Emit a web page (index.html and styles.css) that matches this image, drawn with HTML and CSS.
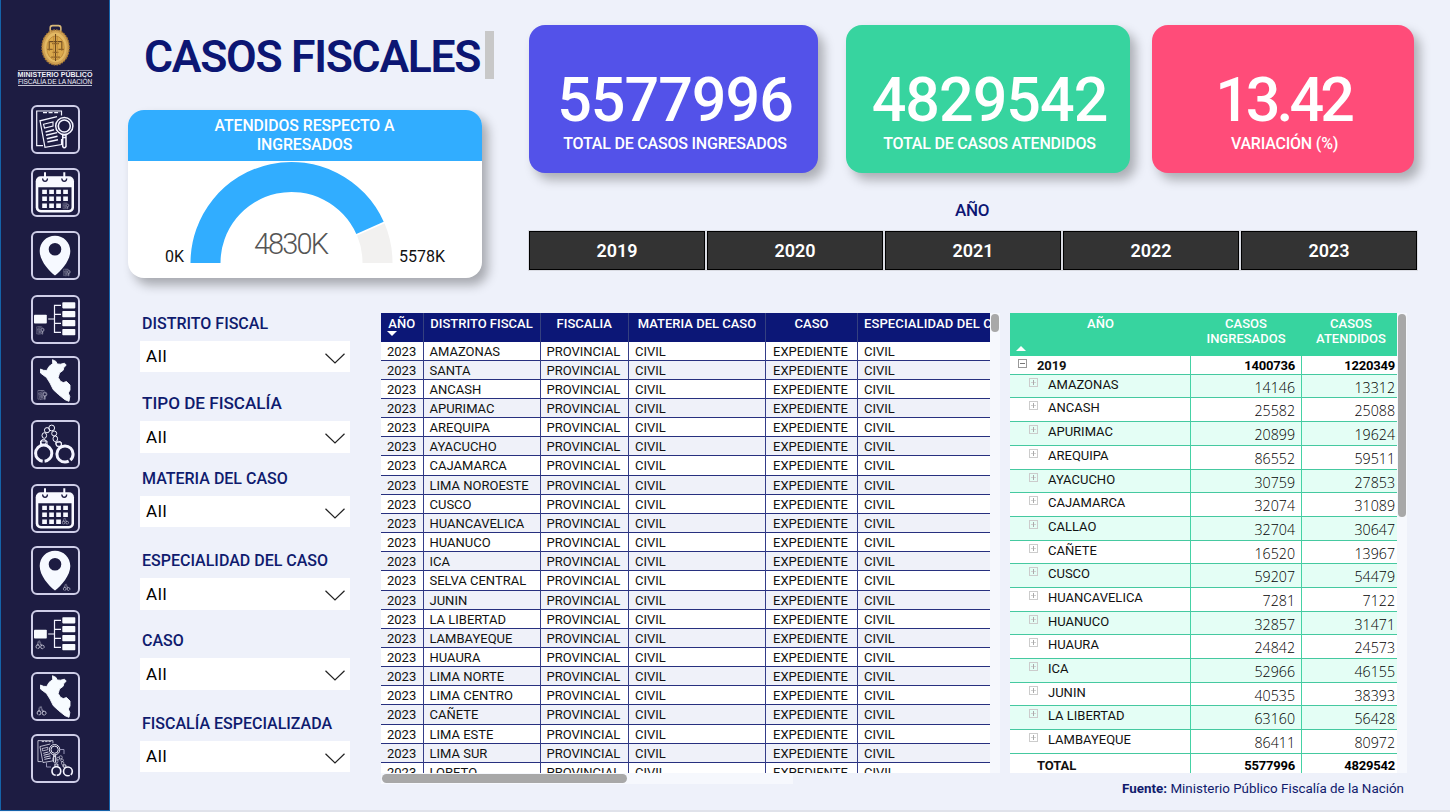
FILE: index.html
```html
<!DOCTYPE html>
<html lang="es">
<head>
<meta charset="utf-8">
<title>Casos Fiscales</title>
<link rel="stylesheet" href="styles.css">
</head>
<body>
<svg class="defs" width="0" height="0">
  <defs>
    <symbol id="doc" viewBox="0 0 48 48">
      <g fill="none" stroke="#f4f4ff" stroke-width="1.2">
        <path d="M12 40.7H5.7V6H30.5V10.5"/>
        <path d="M12 7.6H29" stroke-dasharray="4 1.6" stroke-width="1.3"/>
        <path d="M26 11.6L9 15.8L14 42.3L30.5 39.5V34"/>
        <path d="M12.5 19.2L22 17V21L13.5 23Z" stroke-width="1.1"/>
        <path d="M14.5 27L23 24.8M15 30.3L26 27.6M15.8 33.7L26.5 31.2M16.4 37L27 34.8" stroke-width="1.4"/>
        <circle cx="33.3" cy="21" r="8.6" stroke-width="1.5" fill="#1d1c42"/>
        <circle cx="33.3" cy="21" r="6" stroke-width="1.6"/>
        <path d="M31.7 30H35V41.5Q33.3 44 31.7 41.5ZM31.7 32.5H35" stroke-width="1.5"/>
      </g>
    </symbol>
    <symbol id="cuffs" viewBox="0 0 48 48">
      <g fill="none" stroke="#f4f4ff">
        <circle cx="12.7" cy="33.2" r="8.1" stroke-width="3" stroke-dasharray="48.9 2" stroke-dashoffset="-13.7"/>
        <circle cx="34" cy="34" r="8.1" stroke-width="3" stroke-dasharray="48.9 2" stroke-dashoffset="-8.8"/>
        <g stroke-width="1">
          <circle cx="12.6" cy="22" r="2.6"/><path d="M9.5 21H16V25H9.5Z"/>
          <ellipse cx="13.3" cy="15.5" rx="2.3" ry="2.8"/><circle cx="16" cy="10.2" r="2.6"/><circle cx="20.7" cy="8" r="2.9"/>
          <circle cx="23.2" cy="13.5" r="2.5"/><ellipse cx="24.3" cy="18.8" rx="2.3" ry="2.8"/><circle cx="27.7" cy="24" r="2.7"/>
          <path d="M24.5 22.5L30 22L31 26.5L25.5 26Z"/>
        </g>
      </g>
    </symbol>
    <symbol id="calendar" viewBox="0 0 48 48">
      <rect x="4.7" y="8.3" width="38.3" height="36.2" rx="5" fill="#f8f9ff"/>
      <path d="M7.3 19.2H40.5V39Q40.5 42 37.5 42H10.3Q7.3 42 7.3 39Z" fill="#1d1c42"/>
      <g fill="none" stroke="#1d1c42" stroke-width="1.5"><path d="M11.8 10.5A2.3 2.3 0 1 0 16.3 10.5M31 10.5A2.3 2.3 0 1 0 35.5 10.5"/></g>
      <path d="M14 4.3V11.5M33.3 4.3V11.5" stroke="#f8f9ff" stroke-width="2"/>
      <path d="M11.2 21.7h4.7v4.4h-4.7zM18.2 21.7h4.7v4.4h-4.7zM25.2 21.7h4.7v4.4h-4.7zM32.2 21.7h4.7v4.4h-4.7zM11.2 28.6h4.7V33h-4.7zM18.2 28.6h4.7V33h-4.7zM25.2 28.6h4.7V33h-4.7zM32.2 28.6h4.7V33h-4.7zM11.2 35.5h4.7v4.4h-4.7zM18.2 35.5h4.7v4.4h-4.7zM25.2 35.5h4.7v4.4h-4.7z" fill="#f8f9ff"/>
    </symbol>
    <symbol id="pin" viewBox="0 0 48 48">
      <path d="M24 4.7C15.3 4.7 8.7 11.3 8.7 20C8.7 29.5 17.5 39.5 24 44.5C30.5 39.5 39.3 29.5 39.3 20C39.3 11.3 32.7 4.7 24 4.7ZM24 12a6.3 6.3 0 1 1 0 12.6a6.3 6.3 0 0 1 0-12.6Z" fill="#f6f9ff"/>
    </symbol>
    <symbol id="tree" viewBox="0 0 48 48">
      <g fill="#f8fafe"><rect x="3" y="19.7" width="12.8" height="8.8" rx=".8"/><rect x="31.3" y="7.2" width="13" height="6.2" rx=".8"/><rect x="31.3" y="16" width="13" height="6.3" rx=".8"/><rect x="31.3" y="25" width="13" height="6.3" rx=".8"/><rect x="31.3" y="34" width="13" height="6.3" rx=".8"/></g>
      <path d="M17.2 24H23.5M30 10.3H23.5V37.3H30M23.5 19.3H30M23.5 28.3H30" fill="none" stroke="#f4f4ff" stroke-width="1.2"/>
    </symbol>
    <symbol id="peru" viewBox="0 0 48 48">
      <path d="M21.5 3.7L25 5.5L26.2 8L29.5 8.2L33.5 7.2L35.2 9.2L32.8 11.5L32.2 14.2L28.5 17L27.2 21.5L29.5 25.3L32.3 26.6L35.5 25.5L39 29V34L37.3 37L38.8 40.5L38 45.3L34 43.7L27.5 38.5L22.3 33.7L19 27L15.5 21.5L9.5 17V13L12.5 14.3L15.7 14.5L18 10.5L21.7 7.5Z" fill="#f7fbff" stroke="#f7fbff" stroke-width=".9" stroke-linejoin="round"/>
    </symbol>
  </defs>
</svg>
<div class="page">
  <aside class="sidebar">
    <div class="brand">
      <svg class="emblem" viewBox="0 0 34 46">
        <rect x="10.5" y="1.5" width="11" height="7" rx="2.5" fill="none" stroke="#d8b878" stroke-width="1.6"/>
        <ellipse cx="16" cy="24" rx="14" ry="18" fill="#cfa052" stroke="#a97b36" stroke-width="1.4" stroke-dasharray="1.8 1"/>
        <ellipse cx="16" cy="24" rx="11.5" ry="15.3" fill="#e3b964"/>
        <ellipse cx="16" cy="24.5" rx="9" ry="12.3" fill="#dba94c" stroke="#ba8638" stroke-width=".8"/>
        <path d="M16 10V38M9.5 18H22.5M9.5 18V27M22.5 18V27" stroke="#6d4a21" stroke-width="1.1"/>
        <path d="M7.5 26H13M19 26H24.5M12.5 20H19.5M13 29H19M11.5 34H20.5" stroke="#8d6228" stroke-width="1.4"/>
        <path d="M14 12V36M18 12V36" stroke="#b98537" stroke-width=".7"/>
      </svg>
      <div class="brand-name">MINISTERIO PÚBLICO</div>
      <div class="brand-sub">FISCALÍA DE LA NACIÓN</div>
    </div>
    <nav class="nav">
      <a><svg viewBox="0 0 48 48"><use href="#doc" width="48" height="48"/></svg></a>
      <a><svg viewBox="0 0 48 48"><use href="#calendar" width="48" height="48"/><use href="#doc" x="31" y="34" width="8" height="8"/></svg></a>
      <a><svg viewBox="0 0 48 48"><use href="#pin" width="48" height="48"/><use href="#doc" x="31.5" y="37" width="9" height="9"/></svg></a>
      <a><svg viewBox="0 0 48 48"><use href="#tree" width="48" height="48"/><use href="#doc" x="4.5" y="30.5" width="10" height="10"/></svg></a>
      <a><svg viewBox="0 0 48 48"><use href="#peru" width="48" height="48"/><use href="#doc" x="5.5" y="33" width="12" height="12"/></svg></a>
      <a><svg viewBox="0 0 48 48"><use href="#cuffs" width="48" height="48"/></svg></a>
      <a><svg viewBox="0 0 48 48"><use href="#calendar" width="48" height="48"/><use href="#cuffs" x="30.5" y="33" width="8" height="8"/></svg></a>
      <a><svg viewBox="0 0 48 48"><use href="#pin" width="48" height="48"/><use href="#cuffs" x="31.5" y="37" width="8.5" height="8.5"/></svg></a>
      <a><svg viewBox="0 0 48 48"><use href="#tree" width="48" height="48"/><use href="#cuffs" x="4" y="29.5" width="10.5" height="10.5"/></svg></a>
      <a><svg viewBox="0 0 48 48"><use href="#peru" width="48" height="48"/><use href="#cuffs" x="5" y="33" width="11.5" height="11.5"/></svg></a>
      <a><svg viewBox="0 0 48 48"><use href="#doc" x="3.5" y="3" width="29" height="29"/><use href="#cuffs" x="18.5" y="19" width="26" height="26"/><path d="M29 15.5H33V20M15.5 28.5V33H20" fill="none" stroke="#9593b5"/></svg></a>
    </nav>
  </aside>

  <main class="main">
    <section class="top">
      <div class="intro">
        <header class="heading"><h1>CASOS FISCALES</h1><span class="thumb title-thumb"></span></header>
        <div class="gauge">
          <h2>ATENDIDOS RESPECTO A<br>INGRESADOS</h2>
          <div class="gauge-body">
            <span class="min">0K</span>
            <div class="dial">
              <svg viewBox="0 0 203 102">
                <path d="M0.5 102A101 101 0 0 1 193.7 60.7L166.3 73A71 71 0 0 0 30.5 102Z" fill="#31adff"/>
                <path d="M194.5 62.3A101 101 0 0 1 202.5 102H172.5A71 71 0 0 0 167.1 74.6Z" fill="#f2f1f0"/>
              </svg>
              <span class="value">4830K</span>
            </div>
            <span class="max">5578K</span>
          </div>
        </div>
      </div>
      <div class="summary">
        <div class="cards">
          <article class="card in"><b>5577996</b><span>TOTAL DE CASOS INGRESADOS</span></article>
          <article class="card out"><b>4829542</b><span>TOTAL DE CASOS ATENDIDOS</span></article>
          <article class="card var"><b>13.42</b><span>VARIACIÓN (%)</span></article>
        </div>
        <div class="year-label">AÑO</div>
        <div class="years"><button>2019</button><button>2020</button><button>2021</button><button>2022</button><button>2023</button></div>
      </div>
    </section>

    <section class="bottom">
      <div class="filters">
        <div class="filter"><label>DISTRITO FISCAL</label><div class="select">All<svg viewBox="0 0 20 11"><path d="M.5 .7L10 10L19.5 .7"/></svg></div></div>
        <div class="filter tall"><label>TIPO DE FISCALÍA</label><div class="select">All<svg viewBox="0 0 20 11"><path d="M.5 .7L10 10L19.5 .7"/></svg></div></div>
        <div class="filter"><label>MATERIA DEL CASO</label><div class="select">All<svg viewBox="0 0 20 11"><path d="M.5 .7L10 10L19.5 .7"/></svg></div></div>
        <div class="filter"><label>ESPECIALIDAD DEL CASO</label><div class="select">All<svg viewBox="0 0 20 11"><path d="M.5 .7L10 10L19.5 .7"/></svg></div></div>
        <div class="filter"><label>CASO</label><div class="select">All<svg viewBox="0 0 20 11"><path d="M.5 .7L10 10L19.5 .7"/></svg></div></div>
        <div class="filter"><label>FISCALÍA ESPECIALIZADA</label><div class="select">All<svg viewBox="0 0 20 11"><path d="M.5 .7L10 10L19.5 .7"/></svg></div></div>
      </div>

      <div class="detail">
        <div class="detail-main">
          <div class="cases" id="cases">
            <div class="case-row case-head"><span>AÑO<i></i></span><span>DISTRITO FISCAL</span><span>FISCALIA</span><span>MATERIA DEL CASO</span><span>CASO</span><span>ESPECIALIDAD DEL CASO</span></div>
          </div>
          <div class="vtrack"><span class="thumb"></span></div>
        </div>
        <div class="htrack"><span class="thumb"></span></div>
      </div>

      <div class="totals">
        <div class="totals-main">
          <div class="matrix" id="matrix">
            <div class="m-row m-head"><span>AÑO<i></i></span><span>CASOS<br>INGRESADOS</span><span>CASOS<br>ATENDIDOS</span></div>
            <div class="m-row m-year"><span><em class="tog"></em>2019</span><span>1400736</span><span>1220349</span></div>
          </div>
          <div class="vtrack long"><span class="thumb"></span></div>
        </div>
        <p class="source"><b>Fuente:</b> Ministerio Público Fiscalía de la Nación</p>
      </div>
    </section>
  </main>
</div>
<script src="app.js"></script>
</body>
</html>
```
FILE: styles.css
```css
* { box-sizing: border-box; }
body { margin: 0; background: #eef1fa; font-family: Roboto, "Liberation Sans", sans-serif; color: #111; }
.defs { display: block; width: 0; height: 0; }
.page { display: flex; width: 1450px; height: 812px; overflow: hidden; }

/* Sidebar */
.sidebar { width: 110px; height: 811px; flex: none; background: #1d1c42; border: solid #1563a9; border-width: 0 1px 1px 1px; padding: 24px 0 0; }
.brand { height: 81px; display: flex; flex-direction: column; align-items: center; color: #f0f0f8; font-family: "Liberation Sans", Arial, sans-serif; white-space: nowrap; }
.emblem { width: 33px; height: 45px; margin-left: 2px; flex: none; }
.brand-name { margin-top: 1px; font-size: 7.05px; line-height: 8px; font-weight: 700; border-top: 1px solid #8d8da5; }
.brand-sub { font-size: 6.5px; line-height: 6px; border-bottom: 1px solid #c4c4d4; letter-spacing: -.08px; }
.nav { display: grid; grid-template-rows: 62.5px 63.5px 64px 61px 64px 63.5px 62.5px 64px 62px 61.5px 49px; justify-content: center; }
.nav a { width: 49px; height: 49px; border: 2px solid #cfcee8; border-radius: 6px; display: block; }
.nav svg { display: block; width: 48px; height: 48px; margin: -2px 0 0 -2px; }

.main { flex: 1; padding: 25px 0 0 18px; border-bottom: 2px solid #e0e2ea; }
.top { display: flex; gap: 47px; height: 288px; }
.intro { width: 354px; }
.heading { height: 85px; padding: 6px 0 0 16px; display: flex; align-items: flex-start; }
h1 { margin: 1px 0 0; width: 341px; flex: none; font-size: 44.5px; line-height: 50px; font-weight: 600; letter-spacing: -1.3px; color: #0c1673; white-space: nowrap; }
.thumb { display: block; background: #a8a8a8; border-radius: 5px; }
.title-thumb { width: 9px; height: 48px; flex: none; border-radius: 0; background: #c8c8c8; }
.gauge { height: 168px; border-radius: 16px; background: #fff; overflow: hidden; box-shadow: 6px 7px 11px rgba(0,0,0,.3); }
.gauge h2 { margin: 0; height: 51px; padding-top: 6px; background: #31adff; color: #fff; font-size: 15.8px; line-height: 19px; font-weight: 500; letter-spacing: -.05px; text-align: center; padding-right: 1px; }
.gauge-body { display: flex; align-items: flex-end; height: 102px; padding-left: 37px; font-size: 16px; line-height: 12px; }
.min { width: 25px; }
.dial { display: grid; width: 203px; height: 102px; }
.dial svg { grid-area: 1 / 1; width: 203px; height: 102px; }
.value { grid-area: 1 / 1; align-self: end; text-align: center; font-size: 29px; line-height: 36px; letter-spacing: -1.9px; font-weight: 300; color: #555; padding: 0 2px 1px 0; }
.max { margin-left: 6px; }

/* Summary cards */
.summary { width: 888px; }
.cards { display: flex; height: 148px; }
.card { border-radius: 16px; display: flex; flex-direction: column; align-items: center; color: #fff; box-shadow: 6px 7px 11px rgba(0,0,0,.28); padding-top: 45px; }
.card b { font-size: 61px; line-height: 60px; font-weight: 500; letter-spacing: -1px; margin-left: 3px; }
.card span { font-size: 16px; line-height: 20px; margin-top: 4px; font-weight: 500; letter-spacing: -.2px; margin-left: 3px; }
.in { width: 289px; background: #5352e9; }
.out { width: 284px; margin-left: 28px; background: #37d49f; }
.var { width: 262px; margin-left: 22px; background: #ff4c79; }
.card.var b { letter-spacing: -4px; margin-left: 0; }
.year-label { height: 58px; padding: 27px 0 0; text-align: center; color: #0c1673; font-size: 17px; line-height: 20px; font-weight: 500; padding-right: 2px; letter-spacing: -.3px; }
.years { display: grid; grid-template-columns: repeat(5, 1fr); gap: 2px; }
.years button { height: 39px; border: 1px solid #000; border-radius: 0; background: #333; color: #fff; font: 600 18px/20px Roboto, sans-serif; padding: 0; outline: 1px solid #d9dbe2; }

/* Lower area */
.bottom { display: flex; }
.filters { width: 222px; margin: -.5px 0 0 12px; display: grid; grid-template-rows: 80.5px 74.5px 82.5px 80px 82.5px 60px; }
.filter { height: 60px; width: 210px; margin-right: 31px; }
.filter label { display: block; height: 28px; padding-left: 2px; font-size: 16px; line-height: 21px; font-weight: 500; color: #0f1b6e; white-space: nowrap; }
.tall label { font-size: 17.1px; line-height: 20px; }
.select { height: 31.5px; background: #fff; display: flex; justify-content: space-between; align-items: center; padding: 0 5px 0 6px; font-size: 17px; letter-spacing: .6px; color: #000; }
.select svg { width: 20px; height: 11px; margin-top: 4px; }
.select path { fill: none; stroke: #222; stroke-width: 1.2; }

.detail { margin-left: 19px; width: 619px; }
.detail-main { display: flex; height: 460px; }
.cases { width: 609px; height: 460px; overflow: hidden; background: #fff; }
.case-row { display: grid; grid-template-columns: 42.5px 117px 88.5px 137px 92px 170px; width: 647px; height: 19.17px; font-size: 13px; line-height: 19px; border-bottom: 1px solid #27307f; white-space: nowrap; }
.case-row:nth-child(odd) { background: #eff1f9; }
.case-row span { padding-left: 6px; border-right: 1px solid #343d88; }
.case-row span:nth-child(5) { padding-left: 7px; }
.case-row.case-head { height: 28.5px; background: #0c1777; color: #fff; font-weight: 500; border: 0; line-height: 21px; }
.case-head span { text-align: center; padding: 0 !important; border-color: #35407f; }
.case-head span:last-child { text-align: left; padding-left: 6px !important; letter-spacing: .12px; }
.case-head i { display: block; width: 0; height: 0; border: 5.5px solid transparent; border-top-color: #fff; border-bottom: 0; margin: -3px 0 0 6px; }
.vtrack { width: 10px; padding: 1px; background: #f6f8fd; }
.vtrack .thumb { height: 18px; }
.vtrack.long .thumb { height: 203px; }
.htrack { width: 412px; height: 11px; padding: 1px; background: #f6f8fd; }
.htrack .thumb { width: 245px; height: 9px; }

.totals { margin-left: 10px; width: 398px; }
.totals-main { display: flex; height: 460px; }
.matrix { width: 387px; height: 460px; overflow: hidden; background: #fff; }
.m-row { display: grid; grid-template-columns: 181px 111px 95px; height: 23.7px; font-size: 13px; border-bottom: 1px solid #45c9a0; white-space: nowrap; }
.m-row:nth-child(odd) { background: #e4fef5; }
.m-row span { border-right: 1px solid #45d2a5; display: flex; line-height: 20px; }
.m-row span:last-child { border-right: 0; }
.m-row span + span { justify-content: flex-end; padding: 3px 6px 0 0; font: 300 14.2px/20px "Open Sans", "Noto Sans", sans-serif; color: #000; }
.m-row span:last-child { padding-right: 2px !important; }
.m-row.m-head { height: 43px; background: #37d49f; color: #fff; border: 0; font-weight: 500; }
.m-head span { border: 0; text-align: center; display: block; line-height: 15px; padding-top: 3px; }
.m-head span + span { font: 500 13px/15px Roboto, sans-serif; color: #fff; padding: 3px 1px 0 0; }
.m-head span:last-child { padding-left: 5px; }
.m-head i { display: block; width: 0; height: 0; border: 5.5px solid transparent; border-bottom-color: #fff; border-top: 0; margin: 14.5px 0 0 6px; }
.m-row.m-year, .m-row.m-total { height: 18.8px; background: #fff; font-weight: 700; letter-spacing: -.1px; }
.m-year span, .m-total span { line-height: 19px; }
.m-year span + span, .m-total span + span { font: 700 13px/19px Roboto, sans-serif; padding-top: 0; letter-spacing: -.2px; }
.m-row.m-total { height: 22px; border: 0; }
.m-total span, .m-total span + span { line-height: 24px; }
.m-total span:first-child { padding-left: 27px; }
.tog { width: 9px; height: 9px; flex: none; border: 1px solid #999; margin: 3px 10px 0 8px; display: grid; place-items: center; }
.tog::before { content: ""; width: 5px; height: 1px; background: #777; grid-area: 1 / 1; }
.sub .tog { margin: 3px 10px 0 19px; border-color: #ccc; }
.sub .tog::before { background: #d2d2d2; }
.sub .tog::after { content: ""; width: 1px; height: 5px; background: #aaa; grid-area: 1 / 1; }
.source { margin: 6px 4px 0 0; text-align: right; font-size: 13.4px; line-height: 20px; color: #111b6d; white-space: nowrap; }
```
FILE: app.js
```js
const districts = ["AMAZONAS", "SANTA", "ANCASH", "APURIMAC", "AREQUIPA", "AYACUCHO", "CAJAMARCA", "LIMA NOROESTE", "CUSCO", "HUANCAVELICA", "HUANUCO", "ICA", "SELVA CENTRAL", "JUNIN", "LA LIBERTAD", "LAMBAYEQUE", "HUAURA", "LIMA NORTE", "LIMA CENTRO", "CAÑETE", "LIMA ESTE", "LIMA SUR", "LORETO"];
document.getElementById("cases").insertAdjacentHTML("beforeend", districts.map(d =>
  `<div class="case-row"><span>2023</span><span>${d}</span><span>PROVINCIAL</span><span>CIVIL</span><span>EXPEDIENTE</span><span>CIVIL</span></div>`).join(""));

const totals = [["AMAZONAS", 14146, 13312], ["ANCASH", 25582, 25088], ["APURIMAC", 20899, 19624], ["AREQUIPA", 86552, 59511], ["AYACUCHO", 30759, 27853], ["CAJAMARCA", 32074, 31089], ["CALLAO", 32704, 30647], ["CAÑETE", 16520, 13967], ["CUSCO", 59207, 54479], ["HUANCAVELICA", 7281, 7122], ["HUANUCO", 32857, 31471], ["HUAURA", 24842, 24573], ["ICA", 52966, 46155], ["JUNIN", 40535, 38393], ["LA LIBERTAD", 63160, 56428], ["LAMBAYEQUE", 86411, 80972]];
document.getElementById("matrix").insertAdjacentHTML("beforeend", totals.map(([d, a, b]) =>
  `<div class="m-row sub"><span><em class="tog"></em>${d}</span><span>${a}</span><span>${b}</span></div>`).join("") +
  `<div class="m-row m-total"><span>TOTAL</span><span>5577996</span><span>4829542</span></div>`);
```
